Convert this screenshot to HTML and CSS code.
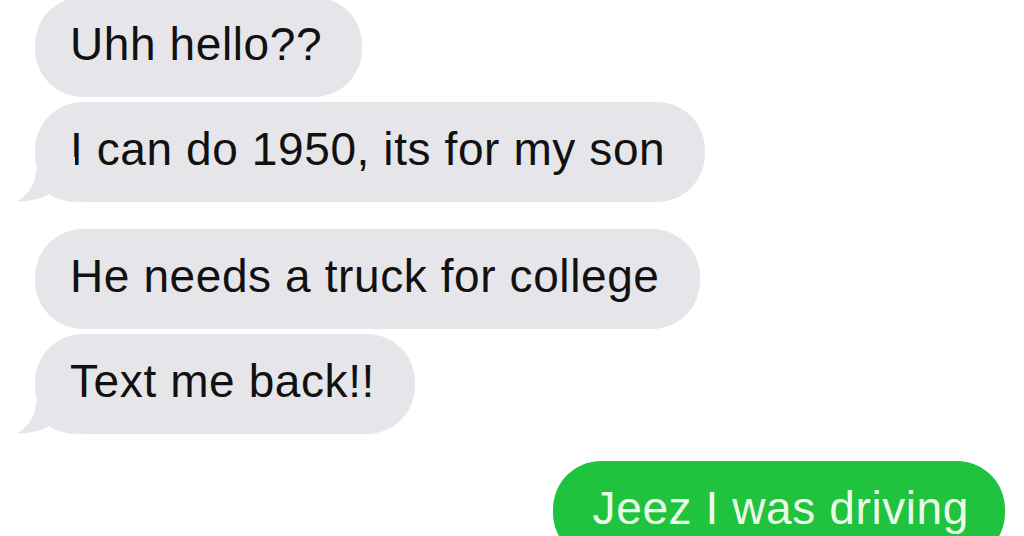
FILE: index.html
```html
<!DOCTYPE html>
<html lang="en">
<head>
    <meta charset="UTF-8">
    <meta name="viewport" content="width=device-width, initial-scale=1.0">
    <title>Messages</title>
    <link rel="stylesheet" href="styles.css">
</head>
<body>
    <div class="thread">
        <div class="group">
            <div class="bubble in">Uhh hello??</div>
            <div class="bubble in tail">
                I can do 1950, its for my son
                <svg class="tail-shape" viewBox="-20 -50 60 50" width="60" height="50">
                    <path d="M2,-45 C2,-20 -4,-8 -18,-1 C-8,0 6,-3 14,-8 C20,-4 28,-1 40,0 L40,-45 Z" />
                </svg>
            </div>
        </div>
        <div class="group">
            <div class="bubble in">He needs a truck for college</div>
            <div class="bubble in tail">
                Text me back!!
                <svg class="tail-shape" viewBox="-20 -50 60 50" width="60" height="50">
                    <path d="M2,-45 C2,-20 -4,-8 -18,-1 C-8,0 6,-3 14,-8 C20,-4 28,-1 40,0 L40,-45 Z" />
                </svg>
            </div>
        </div>
        <div class="group">
            <div class="bubble out">Jeez I was driving</div>
        </div>
    </div>
</body>
</html>
```

FILE: styles.css
```css
* {
    margin: 0;
    padding: 0;
    box-sizing: border-box;
}

body {
    background: #fff;
    font-family: 'Liberation Sans', Arial, sans-serif;
    overflow: hidden;
    height: 536px;
}

.thread {
    display: flex;
    flex-direction: column;
    gap: 27px;
    margin-top: -3px;
}

.group {
    display: flex;
    flex-direction: column;
    gap: 5px;
}

.bubble {
    position: relative;
    height: 100px;
    padding: 0 40px 6px 35px;
    line-height: 94px;
    font-size: 46px;
    letter-spacing: 0.6px;
    border-radius: 48px;
    white-space: nowrap;
}

.bubble.in {
    align-self: flex-start;
    margin-left: 35px;
    background: #e5e5ea;
    color: #111;
}

.bubble.out {
    align-self: flex-end;
    margin-right: 19px;
    background: #20c33e;
    color: #eafce9;
    padding-left: 40px;
    padding-right: 36px;
}

.tail-shape {
    position: absolute;
    left: -20px;
    bottom: 0;
    fill: #e5e5ea;
}
```
